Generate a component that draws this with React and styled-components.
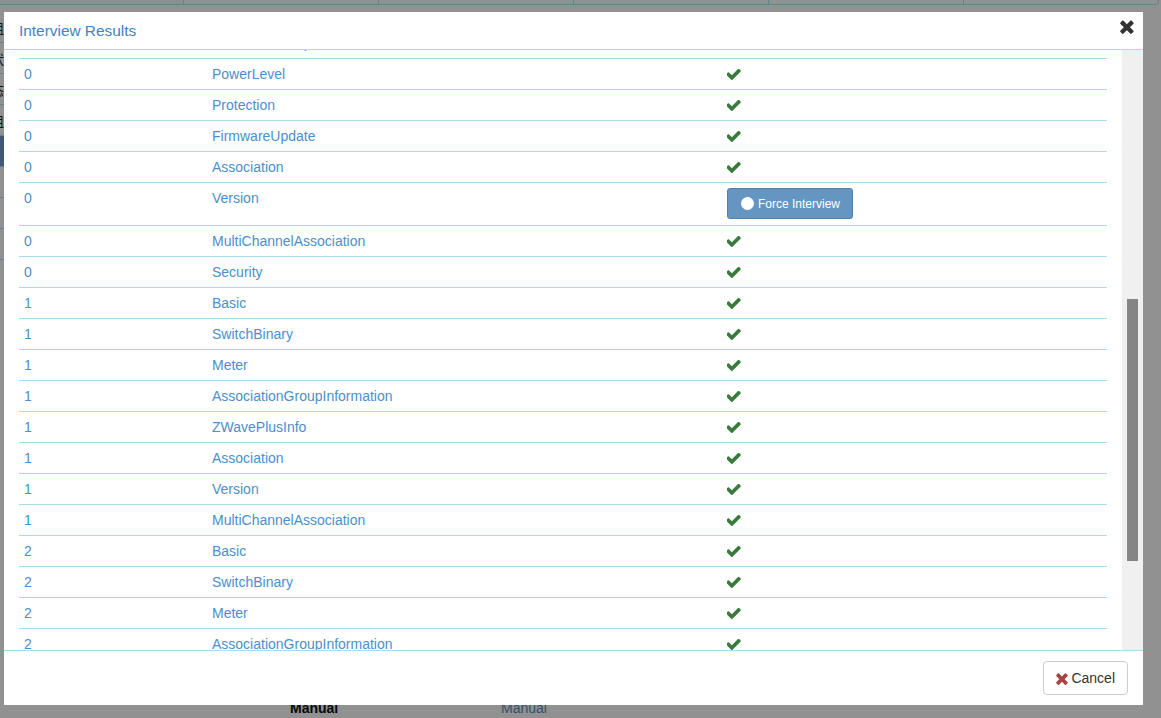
import React, { useLayoutEffect, useRef } from "react";
import styled, { createGlobalStyle } from "styled-components";

const GlobalStyle = createGlobalStyle`
  html, body { margin: 0; padding: 0; height: 100%; overflow: hidden; }
  body { background: #fff; font-family: "Liberation Sans", Arial, sans-serif; font-size: 14px; color: #333; }
  * { box-sizing: border-box; }
`;

/* ---------- background page ---------- */
const Page = styled.div`
  height: 100vh;
  display: flex;
  flex-direction: column;
`;
const TabStrip = styled.div`
  display: flex;
  height: 5px;
`;
const Tab = styled.div`
  width: ${(p) => p.$w}px;
  border-bottom: 1px solid #a6e6f5;
  border-right: 1px solid #a6e6f5;
  background: ${(p) => (p.$active ? "#fafafa" : "#fff")};
  border-bottom-right-radius: ${(p) => (p.$last ? "4px" : "0")};
`;
const PageBody = styled.div`
  flex: 1;
  display: flex;
  flex-direction: column;
  padding-top: 7px;
`;
const SideRow = styled.div`
  width: 4px;
  height: 31px;
  overflow: hidden;
  display: flex;
  justify-content: flex-end;
  align-items: center;
  border-bottom: 1px solid #a6e6f5;
  background: ${(p) => (p.$dark ? "#6f9fcc" : "transparent")};
  font-family: "Noto Sans CJK SC", sans-serif;
  font-size: 13px;
  color: #222;
  white-space: nowrap;
`;
const BottomRow = styled.div`
  display: flex;
  height: 20px;
  align-items: center;
  padding-left: 290px;
`;
const BoldCell = styled.div`
  width: 211px;
  font-weight: bold;
  color: #111;
`;
const LinkCell = styled.div`
  color: #5b8fc4;
`;

/* ---------- modal ---------- */
const Backdrop = styled.div`
  position: fixed;
  inset: 0;
  background: rgba(0, 0, 0, 0.43);
`;
const Modal = styled.div`
  position: fixed;
  left: 4px;
  top: 12px;
  width: 1139px;
  height: 693px;
  background: #fff;
  display: flex;
  flex-direction: column;
`;
const Header = styled.div`
  height: 38px;
  flex: none;
  display: flex;
  align-items: center;
  justify-content: space-between;
  padding: 1px 8px 0 15px;
  border-bottom: 1px solid #a6dcef;
`;
const Title = styled.h4`
  margin: 0;
  font-size: 15.4px;
  font-weight: normal;
  color: #3b85c5;
`;
const CloseButton = styled.button`
  align-self: flex-start;
  margin-top: 6px;
  padding: 0;
  border: 0;
  background: none;
  width: 15px;
  height: 15px;
  display: flex;
  color: #333;
`;
const BodyArea = styled.div`
  flex: 1;
  min-height: 0;
  display: flex;
`;
const Viewport = styled.div`
  flex: 1;
  overflow: hidden;
  padding: 15px;
`;
const ScrollTrack = styled.div`
  width: 21px;
  flex: none;
  background: #f0f0f0;
  padding: ${(p) => p.$offset}px 5px 0;
`;
const ScrollThumb = styled.div`
  height: ${(p) => p.$length}px;
  background: #858585;
`;
const Table = styled.table`
  width: 100%;
  table-layout: fixed;
  border-collapse: collapse;
  margin-bottom: 20px;
`;
const Cell = styled.td`
  padding: 5px;
  line-height: 20px;
  vertical-align: top;
  border-top: 1px solid #a6dcef;
  color: #4a90cc;
  font-size: 14px;
`;
const CheckWrap = styled.div`
  display: flex;
  align-items: center;
  height: 20px;
  padding-top: 1px;
  color: #3a7a3c;
`;
const ForceButton = styled.button`
  display: flex;
  align-items: center;
  gap: 4px;
  height: 31px;
  margin-bottom: 1px;
  padding: 0 12px 0 13px;
  background: #6496c1;
  border: 1px solid #4d80ad;
  border-radius: 3px;
  color: #fff;
  font-family: "Liberation Sans", Arial, sans-serif;
  font-size: 12px;
`;
const Dot = styled.span`
  width: 13px;
  height: 13px;
  border-radius: 50%;
  background: #fff;
`;
const Footer = styled.div`
  flex: none;
  display: flex;
  justify-content: flex-end;
  padding: 10px 15px;
  border-top: 1px solid #a6dcef;
`;
const CancelButton = styled.button`
  display: inline-flex;
  align-items: center;
  gap: 3px;
  height: 34px;
  padding: 0 12px;
  background: #fff;
  border: 1px solid #ccc;
  border-radius: 4px;
  color: #333;
  font-family: "Liberation Sans", Arial, sans-serif;
  font-size: 14px;
`;
const RedX = styled.span`
  display: inline-flex;
  color: #a94442;
`;

const TimesIcon = ({ size = 14 }) => (
  <svg width={size * 0.92} height={size} viewBox="100 230 1210 1330" fill="currentColor">
    <path d="M1298 1322q0 40-28 68l-136 136q-28 28-68 28t-68-28l-294-294-294 294q-28 28-68 28t-68-28l-136-136q-28-28-28-68t28-68l294-294-294-294q-28-28-28-68t28-68l136-136q28-28 68-28t68 28l294 294 294-294q28-28 68-28t68 28l136 136q28 28 28 68t-28 68l-294 294 294 294q28 28 28 68z" />
  </svg>
);

const CheckIcon = () => (
  <svg width="14" height="11" viewBox="200 390 1490 1090" fill="currentColor">
    <path d="M1671 566q0 40-28 68l-724 724-136 136q-28 28-68 28t-68-28l-136-136-362-362q-28-28-28-68t28-68l136-136q28-28 68-28t68 28l294 295 656-657q28-28 68-28t68 28l136 136q28 28 28 68z" />
  </svg>
);

const rows = [
  [0, "Basic"], [0, "SwitchBinary"], [0, "SwitchAll"], [0, "SceneActivation"],
  [0, "SceneActuatorConf"], [0, "Meter"], [0, "MultiChannel"], [0, "Configuration"],
  [0, "AssociationGroupInformation"], [0, "ZWavePlusInfo"], [0, "DeviceResetLocally"],
  [0, "CentralScene"], [0, "Notification"], [0, "CRC16Encap"], [0, "ApplicationStatus"],
  [0, "Indicator"], [0, "Clock"], [0, "ManufacturerSpecific"],
  [0, "PowerLevel", "anchor"], [0, "Protection"], [0, "FirmwareUpdate"], [0, "Association"],
  [0, "Version", "force"], [0, "MultiChannelAssociation"], [0, "Security"],
  [1, "Basic"], [1, "SwitchBinary"], [1, "Meter"], [1, "AssociationGroupInformation"],
  [1, "ZWavePlusInfo"], [1, "Association"], [1, "Version"], [1, "MultiChannelAssociation"],
  [2, "Basic"], [2, "SwitchBinary"], [2, "Meter"], [2, "AssociationGroupInformation"],
  [2, "ZWavePlusInfo"], [2, "Association"], [2, "Version"], [2, "MultiChannelAssociation"],
  [3, "Basic"],
];

const tabWidths = [184, 195, 195, 195, 195, 195];
const sideRows = ["组", "状", "态", "组", "", "", "", ""];

export default function App() {
  const bodyRef = useRef(null);
  const anchorRef = useRef(null);

  useLayoutEffect(() => {
    const body = bodyRef.current;
    const anchor = anchorRef.current;
    if (body && anchor) {
      const off = anchor.getBoundingClientRect().top - body.getBoundingClientRect().top + body.scrollTop;
      body.scrollTop = Math.round(off) - 9;
    }
  }, []);

  return (
    <>
      <GlobalStyle />
      <Page>
        <TabStrip>
          {tabWidths.map((w, i) => (
            <Tab key={i} $w={w} $active={i === 0} $last={i === tabWidths.length - 1} />
          ))}
        </TabStrip>
        <PageBody>
          {sideRows.map((t, i) => (
            <SideRow key={i} $dark={i === 4}>{t}</SideRow>
          ))}
        </PageBody>
        <BottomRow>
          <BoldCell>Manual</BoldCell>
          <LinkCell>Manual</LinkCell>
        </BottomRow>
      </Page>
      <Backdrop />
      <Modal>
        <Header>
          <Title>Interview Results</Title>
          <CloseButton aria-label="close">
            <TimesIcon size={15} />
          </CloseButton>
        </Header>
        <BodyArea>
          <Viewport ref={bodyRef}>
            <Table>
              <colgroup>
                <col style={{ width: 188 }} />
                <col style={{ width: 515 }} />
                <col />
              </colgroup>
              <tbody>
                {rows.map(([inst, name, kind], i) => (
                  <tr key={i} ref={kind === "anchor" ? anchorRef : undefined}>
                    <Cell>{inst}</Cell>
                    <Cell>{name}</Cell>
                    <Cell>
                      {kind === "force" ? (
                        <ForceButton>
                          <Dot />
                          Force Interview
                        </ForceButton>
                      ) : (
                        <CheckWrap>
                          <CheckIcon />
                        </CheckWrap>
                      )}
                    </Cell>
                  </tr>
                ))}
              </tbody>
            </Table>
          </Viewport>
          <ScrollTrack $offset={249}>
            <ScrollThumb $length={262} />
          </ScrollTrack>
        </BodyArea>
        <Footer>
          <CancelButton>
            <RedX>
              <TimesIcon size={13} />
            </RedX>
            Cancel
          </CancelButton>
        </Footer>
      </Modal>
    </>
  );
}
